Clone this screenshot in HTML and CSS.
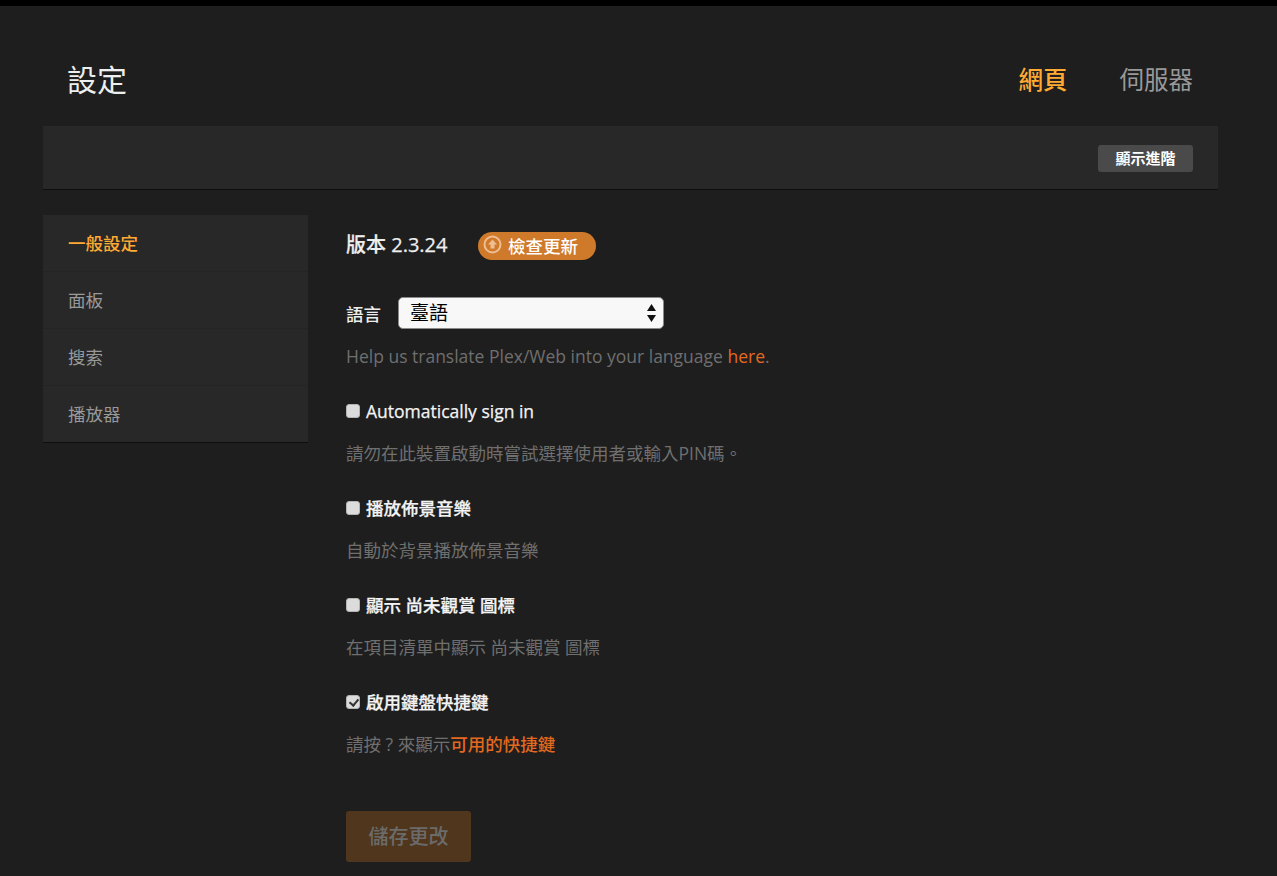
FILE: index.html
```html
<!DOCTYPE html>
<html lang="zh-Hant">
<head>
<meta charset="utf-8">
<title>設定</title>
<link rel="stylesheet" href="styles.css">
</head>
<body>
<div class="page">
  <header class="header">
    <h1 class="title">設定</h1>
    <nav class="tabs">
      <a class="tab tab-active">網頁</a>
      <a class="tab">伺服器</a>
    </nav>
  </header>
  <div class="toolbar"><button class="btn-advanced">顯示進階</button></div>
  <div class="content">
    <ul class="sidebar">
      <li class="side-item side-active">一般設定</li>
      <li class="side-item">面板</li>
      <li class="side-item">搜索</li>
      <li class="side-item">播放器</li>
    </ul>
    <main class="main">
      <div class="version-row">
        <span class="version">版本 2.3.24</span>
        <span class="update">
          <svg class="update-icon" width="19" height="19" viewBox="0 0 19 19"><circle cx="9.5" cy="9.5" r="8" fill="none" stroke="#eebd92" stroke-width="2"/><path d="M9.5 4.500 14 9.500H11.500V13.500H7.500V9.500H5Z" fill="#eebd92"/></svg>
          檢查更新
        </span>
      </div>
      <div class="lang-row">
        <label class="lang-label">語言</label>
        <div class="select-wrap">
          <select class="select"><option>臺語</option></select>
          <svg class="select-arrows" width="9" height="18" viewBox="0 0 9 18"><path d="M4.500 0 9 7H0Z M0 11H9L4.500 18Z" fill="#111"/></svg>
        </div>
      </div>
      <p class="help help-lang">Help us translate Plex/Web into your language <a class="link">here</a>.</p>

      <label class="check-row"><input type="checkbox" class="check"><span>Automatically sign in</span></label>
      <p class="help">請勿在此裝置啟動時嘗試選擇使用者或輸入PIN碼。</p>

      <label class="check-row"><input type="checkbox" class="check"><span>播放佈景音樂</span></label>
      <p class="help">自動於背景播放佈景音樂</p>

      <label class="check-row"><input type="checkbox" class="check"><span>顯示 尚未觀賞 圖標</span></label>
      <p class="help">在項目清單中顯示 尚未觀賞 圖標</p>

      <label class="check-row"><input type="checkbox" class="check" checked><span>啟用鍵盤快捷鍵</span></label>
      <p class="help">請按 ? 來顯示<a class="link">可用的快捷鍵</a></p>

      <button class="save">儲存更改</button>
    </main>
  </div>
</div>
</body>
</html>
```
FILE: styles.css
```css
* { box-sizing: border-box; }
html, body { margin: 0; height: 100%; }
body {
  background: #1e1e1e;
  border-top: 6px solid #000;
  color: #eee;
  font-family: "Open Sans", "Noto Sans CJK TC", sans-serif;
  overflow: hidden;
}
.page { margin: 0 59px 0 43px; }
.header {
  height: 120px;
  display: flex;
  justify-content: space-between;
  align-items: center;
  padding: 28px 25px 0;
}
.title { margin: 0 0 0 -1px; font-size: 30px; font-weight: 400; line-height: 36px; color: #eee; }
.tabs { display: flex; gap: 52px; }
.tab { font-size: 24.5px; line-height: 36px; color: #999; }
.tab-active { color: #ffab33; font-weight: 500; }
.toolbar {
  height: 64px;
  background: #282828;
  border-bottom: 1px solid #0e0e0e;
  display: flex;
  justify-content: flex-end;
  align-items: center;
  padding: 2px 25px 0;
}
.btn-advanced {
  width: 95px;
  height: 27px;
  border: 0;
  border-radius: 3px;
  background: #4a4a4a;
  color: #fff;
  font: 700 15px/27px "Open Sans", "Noto Sans CJK TC", sans-serif;
  padding: 0;
}
.content { display: flex; margin-top: 25px; }
.sidebar {
  list-style: none;
  margin: 0;
  padding: 0;
  width: 265px;
  flex: none;
  height: 228px;
  background: #282828;
  border-bottom: 1px solid #0e0e0e;
}
.side-item {
  height: 57px;
  padding-left: 25px;
  font-size: 17.5px;
  line-height: 57px;
  color: #999;
  border-bottom: 1px solid #242424;
}
.side-item:last-child { border-bottom: 0; }
.side-active { color: #ffab33; font-weight: 500; }
.main { margin-left: 38px; flex: 1; min-width: 0; }
.version-row { display: flex; align-items: center; height: 27px; margin-top: 17px; }
.version {
  font-size: 20px;
  font-weight: 500;
  color: #eee;
  line-height: 27px;
  width: 132px;
  padding-bottom: 2px;
  -webkit-text-stroke: 0.25px #eee;
}
.update {
  display: flex;
  align-items: center;
  gap: 6px;
  width: 118px;
  height: 28px;
  padding-left: 5px;
  border-radius: 14px;
  background: #cf7a2b;
  color: #fff;
  font-size: 17.5px;
  font-weight: 500;
  line-height: 28px;
}
.update-icon { flex: none; margin-top: -2px; }
.lang-row { display: flex; align-items: center; margin-top: 37px; height: 33px; }
.lang-label { font-size: 17.5px; font-weight: 500; color: #eee; width: 52px; padding-top: 2px; line-height: 24px; }
.select-wrap { position: relative; width: 266px; height: 32px; }
.select {
  appearance: none;
  width: 100%;
  height: 100%;
  background: #f8f8f8;
  border: 1px solid #8a8a8a;
  border-radius: 5px;
  color: #000;
  font: 400 19px/30px "Open Sans", "Noto Sans CJK TC", sans-serif;
  padding: 0 0 0 11px;
  display: block;
}
.select-arrows { position: absolute; right: 8px; top: 7px; pointer-events: none; }
.help { margin: 0; font-size: 17.5px; line-height: 24px; color: #6f6f6f; }
.help-lang { margin-top: 15px; }
.link { color: #e2691f; font-weight: 500; }
.check-row {
  display: flex;
  align-items: center;
  height: 24px;
  margin-top: 31px;
  font-size: 17.5px;
  line-height: 24px;
  font-weight: 500;
  color: #f4f4f4;
  -webkit-text-stroke: 0.25px #f4f4f4;
}
.check-row + .help { margin-top: 18px; }
.check {
  appearance: none;
  width: 14px;
  height: 14px;
  margin: 0 6px 0 0;
  flex: none;
  border-radius: 3px;
  background: #dcdcdc;
  border: 1px solid #b4b4b4;
  position: relative;
}
.check:checked::after {
  content: "";
  position: absolute;
  left: 4px;
  top: 1px;
  width: 4px;
  height: 7px;
  border: solid #333;
  border-width: 0 2px 2px 0;
  transform: rotate(40deg);
}
.save {
  display: block;
  width: 125px;
  height: 51px;
  margin-top: 55px;
  border: 0;
  border-radius: 3px;
  background: #50361d;
  color: #6b6b6b;
  font: 500 20px/51px "Open Sans", "Noto Sans CJK TC", sans-serif;
  padding: 0;
}
```
